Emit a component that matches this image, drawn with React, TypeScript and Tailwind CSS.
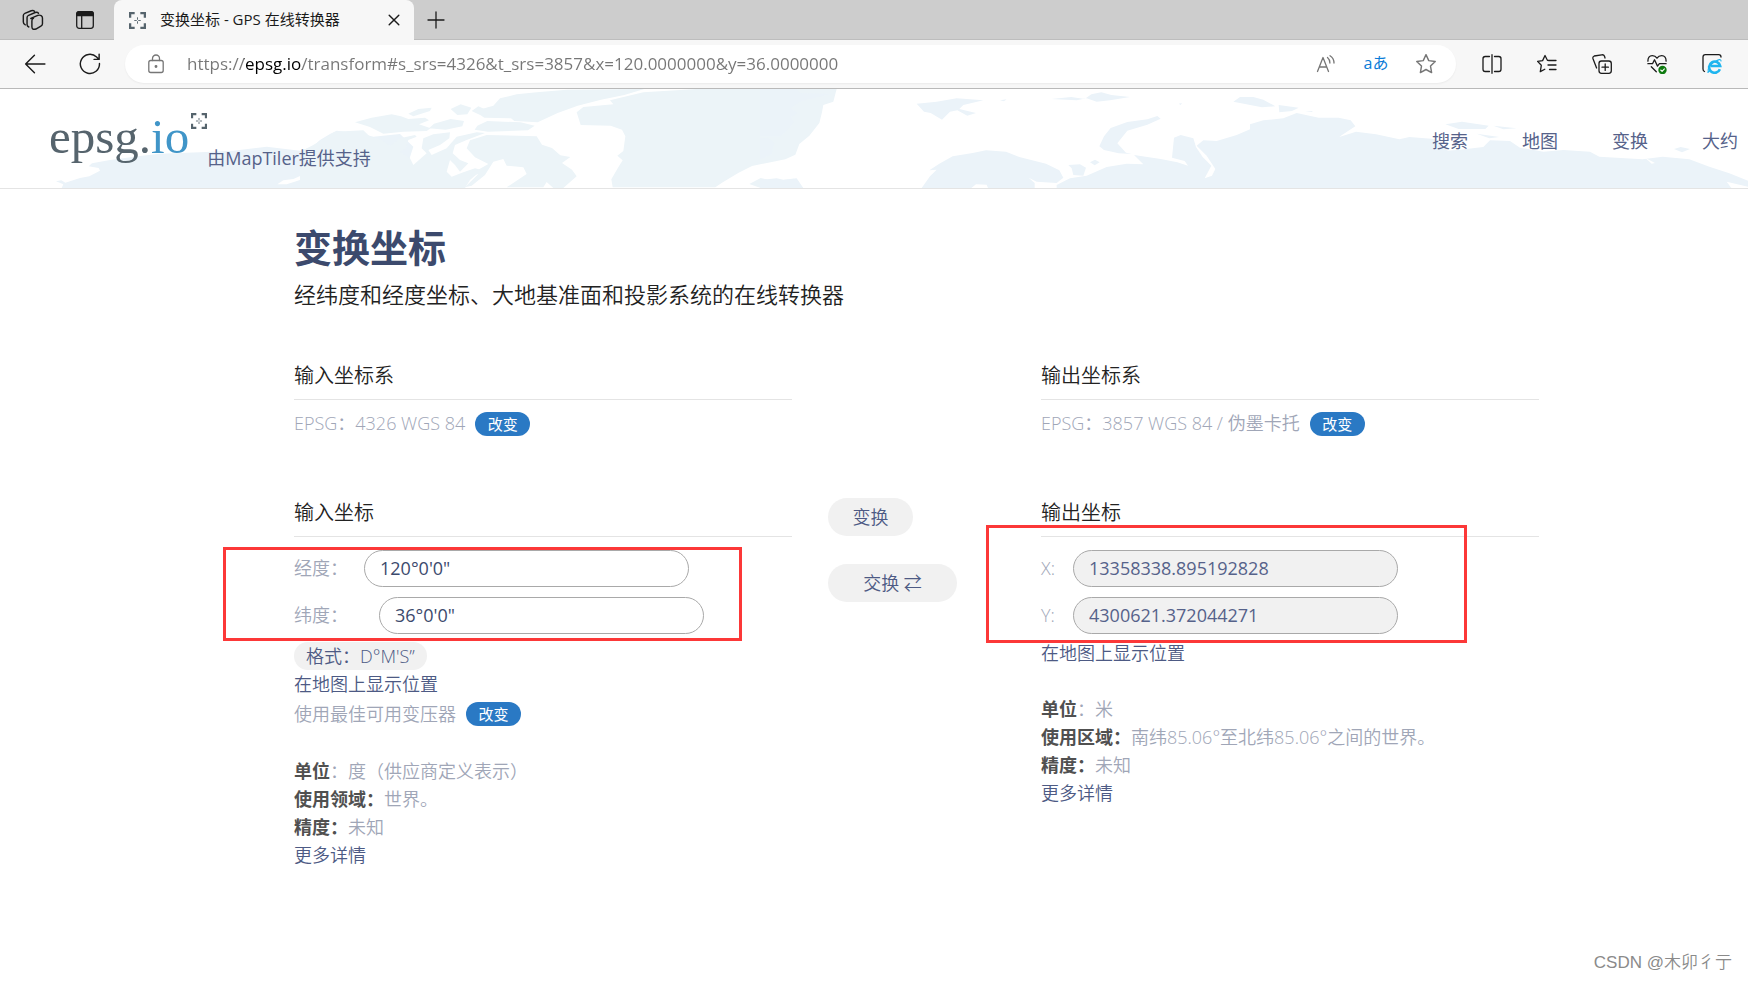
import { useState, type ReactNode } from "react";

const NAV_LINKS = ["搜索", "地图", "变换", "大约"];

const INPUT_DETAILS = [
  { label: "单位", colon: "：", value: "度（供应商定义表示）" },
  { label: "使用领域：", colon: "", value: "世界。" },
  { label: "精度：", colon: "", value: "未知" },
];

const OUTPUT_DETAILS = [
  { label: "单位", colon: "：", value: "米" },
  { label: "使用区域：", colon: "", value: "南纬85.06°至北纬85.06°之间的世界。" },
  { label: "精度：", colon: "", value: "未知" },
];

function Icon({ size = 20, children }: { size?: number; children: ReactNode }) {
  return (
    <svg
      width={size}
      height={size}
      viewBox="0 0 20 20"
      fill="none"
      stroke="currentColor"
      strokeWidth="1.3"
      strokeLinecap="round"
      strokeLinejoin="round"
      aria-hidden="true"
    >
      {children}
    </svg>
  );
}

function TargetIcon({ size }: { size: number }) {
  return (
    <svg width={size} height={size} viewBox="0 0 18 18" fill="none" stroke="#56646d" aria-hidden="true">
      <path strokeWidth="2.4" d="M1.2 6V1.2H6M12 1.2h4.8V6M16.8 12v4.8H12M6 16.8H1.2V12" />
      <path strokeWidth="1" d="M9 5.6v2.6M9 9.8v2.6M5.6 9h2.6M9.8 9h2.6" />
    </svg>
  );
}

function TabStrip() {
  return (
    <div className="flex h-10 items-stretch border-b border-[#bdbdbd] bg-[#cdcdcd] text-[#1b1b1b]">
      <div className="flex w-[114px] items-center gap-[31px] pl-[22px]">
        <button aria-label="Workspaces">
          <Icon size={22}>
            <path d="M8.2 8.4 14.6 5.6q1.6-.5 3 .2 1.2.7 1.2 2.2v5.2q0 1.5-1.4 2.2l-4.6 2.6q-3.6 1-3.6-2V10.4q0-1.4 1.4-2z" transform="translate(-.2 .2)" />
            <path d="M6.2 16.4q-1.6-.6-1.6-2.2V7.8q0-1.4 1.4-2l6-2.6q2-.6 3 .6" />
            <path d="M3 14.4q-1.8-.8-1.8-2.6V6q0-1.4 1.4-2L8.4 1.6q1.8-.6 3 .4" />
          </Icon>
        </button>
        <button aria-label="Tab actions">
          <Icon>
            <rect x="1.7" y="1.7" width="16.6" height="16.6" rx="2.5" />
            <path d="M1.7 5.5V4q0-2.3 2.3-2.3h12q2.3 0 2.3 2.3v1.5z" fill="currentColor" />
            <path d="M6.7 6v12" />
          </Icon>
        </button>
      </div>
      <div className="-mb-px flex w-[300px] items-center rounded-t-lg bg-[#f7f7f7] pr-3 pl-[15px]">
        <TargetIcon size={17} />
        <span className="ml-[14px] flex-1 truncate pb-0.5 text-[15px] leading-5">变换坐标 - GPS 在线转换器</span>
        <button aria-label="Close tab">
          <Icon size={16}>
            <path d="M4 4l12 12M16 4 4 16" strokeWidth="1.8" />
          </Icon>
        </button>
      </div>
      <button aria-label="New tab" className="ml-3">
        <Icon>
          <path d="M10 2v16M2 10h16" />
        </Icon>
      </button>
    </div>
  );
}

function ToolButton({ label, children }: { label: string; children: ReactNode }) {
  return (
    <button aria-label={label} className="flex w-[55px] shrink-0 items-center justify-center">
      {children}
    </button>
  );
}

function AddressBar() {
  const [url, setUrl] = useState(
    "https://epsg.io/transform#s_srs=4326&t_srs=3857&x=120.0000000&y=36.0000000"
  );

  return (
    <div className="flex h-[38px] min-w-0 flex-1 items-stretch rounded-full bg-white pr-[5px] text-[#767676] shadow-xs">
      <button aria-label="Site information" className="flex w-[62px] shrink-0 items-center justify-center">
        <Icon>
          <rect x="2.8" y="6.5" width="14.4" height="12" rx="2" />
          <path d="M6.5 6.5V4.5a3.5 3.5 0 0 1 7 0v2" />
          <circle cx="10" cy="12.500" r=".8" fill="currentColor" />
        </Icon>
      </button>
      {/* The gradient darkens the host part of the address */}
      <input
        aria-label="Address"
        value={url}
        onChange={(e) => setUrl(e.target.value)}
        className="min-w-0 flex-1 bg-[linear-gradient(to_right,#767676_57px,#000_57px,#000_115px,#767676_115px)] bg-clip-text text-[17px] text-transparent outline-none"
      />
      <button aria-label="Read aloud" className="flex w-[50px] items-center justify-center">
        <Icon>
          <path d="M1.5 17.5 7 3.5l5.5 14M3.3 13h7.4M11.5 3.5q2.4 2 2.4 5.5M14 1.8q4 2.6 4 7.2" />
        </Icon>
      </button>
      <button aria-label="Translate" className="w-[50px] pb-0.5 text-[16px] text-[#0a7cd8]">
        aあ
      </button>
      <button aria-label="Add to favorites" className="flex w-[50px] items-center justify-center">
        <Icon size={22}>
          <path d="m10 1.5 2.5 5.4 5.9.8-4.3 4.2 1 5.9L10 15l-5.1 2.8 1-5.9-4.300-4.200 5.900-.8z" />
        </Icon>
      </button>
    </div>
  );
}

function Toolbar() {
  return (
    <div className="flex h-[49px] items-stretch border-b border-[#b9b9b9] bg-[#f7f7f7] py-[5px] pr-[9px] pl-[7px] text-[#1b1b1b]">
      <ToolButton label="Back">
        <Icon size={22}>
          <path d="M19 10H1.5M9.500 2 1.500 10l8 8" />
        </Icon>
      </ToolButton>
      <ToolButton label="Reload">
        <Icon size={22}>
          <path d="M18.6 9.5a8.7 8.7 0 1 1-2.6-5.800l1.800 1.700M18.300 1v4.800h-4.600" />
        </Icon>
      </ToolButton>
      <div className="mx-2 flex min-w-0 flex-1">
        <AddressBar />
      </div>
      <ToolButton label="Split screen">
        <Icon>
          <path d="M7.5 2.500H3.200Q1 2.500 1 4.700v10.600q0 2.200 2.200 2.200h4.300M12.500 2.500h4.300q2.200 0 2.200 2.200v10.600q0 2.200-2.200 2.200h-4.300M10 .7v18.600" />
        </Icon>
      </ToolButton>
      <ToolButton label="Favorites">
        <Icon>
          <path d="M12 6.500 10.400 6.300 8 1.500 5.600 6.600l-5 .8 3.700 3.900-1 6.300 4.500-2.400M12.500 6.500H19M11 11h8M12.500 15.500H19" />
        </Icon>
      </ToolButton>
      <ToolButton label="Collections">
        <Icon>
          <rect x="7" y="7" width="12.300" height="12.300" rx="2.500" />
          <path d="M13.200 10v6.400M10 13.200h6.400M4.600 14 1 4.700q-.6-2 1.200-2.700l7.500-1.200q2.200-.3 2.800 1.400l.5 1.800" />
        </Icon>
      </ToolButton>
      <ToolButton label="Browser essentials">
        <Icon>
          <path d="M.9 7.200Q.8 1.700 5.300 1.700q3 0 4.700 2.500 1.700-2.500 4.700-2.500 4.500 0 4.400 5.500M.9 9.700h4.600l2-3.900 3 6.300 1.900-2.400h6.700M4.300 12.800l5 5" />
          <circle cx="15.500" cy="16" r="4.200" fill="#0f7b10" stroke="none" />
          <path d="m13.700 16 1.400 1.300 2.300-2.500" stroke="#fff" strokeWidth="1.100" />
        </Icon>
      </ToolButton>
      <ToolButton label="Internet Explorer mode">
        <Icon>
          <path d="M2.500 17.500Q1 17 1 15V3q0-2.300 2.300-2.300h13.400Q19 .7 19 3" />
          <path d="M17.900 15.300A5.600 5.600 0 1 1 18.200 12H8.800" stroke="#1fb5ef" strokeWidth="2.600" strokeLinecap="butt" strokeLinejoin="miter" />
          <path d="M7.500 17.200q-2.300 2.400-1.300.2-1.300-4 6.200-9.500Q19 3.800 19 7" stroke="#1fb5ef" strokeWidth="1.100" />
        </Icon>
      </ToolButton>
    </div>
  );
}

// Arctic coastlines, drawn in four strips at a third of their size
function WorldMap() {
  return (
    <svg
      className="absolute inset-0 h-full w-full"
      viewBox="0 0 5244 297"
      preserveAspectRatio="xMidYMid slice"
      fill="#ebf3f9"
      aria-hidden="true"
    >
      <g transform="translate(0 -267)">
        <path d="M185 564 190 553 168 544 184 541 196 548 240 534 268 529 300 512 296 504 266 499 276 490 330 480 420 468 480 461 600 457 700 452 800 440 900 452 938 440 960 420 990 402 1010 392 1060 398 1080 400 1120 410 1200 402 1240 440 1200 564z" />
        <path d="m832 553 18-12 30-4 22-10 6 10-24 8-24 8z" fill="#fff" />
      </g>
      <g transform="translate(900 -12)" fill="#ecf4f8">
        <path d="M0 200 40 180 90 150 105 140 190 136 210 155 245 165 270 182 300 160 345 150 350 155 325 165 318 190 300 200 330 220 340 240 380 205 365 190 370 160 400 148 450 142 448 160 420 180 385 195 395 210 440 190 470 155 530 142 555 144 500 165 465 180 458 205 480 225 505 235 480 260 465 240 450 225 440 260 455 275 490 262 525 250 545 255 510 285 495 309H0z" />
        <path d="m165 112 50-14 60-10 28 6 22 8 50-4 12 8-30 12 35 12-12 8-70 2-60 6-40-20zM325 86l30-14 40-4-5 10-50 16zM452 72l30-14 32 10-12 20-30 2zM402 116l50-14 40 6-5 16-50 10-50-4zM532 122l30-14 100 4 42 10-20 14-120 4-40-6zM580 62l20-22 50-12 60-6 90-8 233-2-60 18-70 14-70 18-60 22-60 28-70-4-10-8-80-2-30-20zM515 78l20-14 40 18-30 10zM500 190l10-24 50-16 150 4 16 25 30 10 25 22 30 5-25 18 30 20 14 20-40 35h-30l-20-18-10 16H620l60-40-10-20-50-5-10-20-30 8-25 40-40 32-20 5 40-40-40 10 70-40-40-20z" />
        <path d="m830 82 20-16 90-8-10-12 100-24 160-10h420l-10 38-30 10-4 22-8 32-30 38-30 25-12 32-30 14-100 20-40 20-50 30-20 14H938l-4-24 20-35 14-22-16-14 18-14 6-44-10-20-34-12-90-2z" />
        <path d="m1348 297 34-18 40 10 60-8 20 28h-120z" />
      </g>
      <g transform="translate(2280 -12)">
        <path d="M60 12h50l10 12 92 3-40 10-50 12-30 20 20 16-20 12 10 14-20 24-22 20H0V12zM0 160l25-2 18 15-8 35-35 15zM0 285l50-5 20 4 40-4 20 29H0z" />
        <path d="m470 56 60-6 60-10 80 6-60 14-12 12 50 12-26 8-30-16-22 4-24 24-34-20-20-4zM720 46l20-3-8 6zM874 42l60-6 40 6 20-14 30-6 30 8 56 6-60 10-40 4-30-10-30 6zM1256 56l10-2-4 6z" />
        <path d="m485 309 25-35 20-20-22 2 30-20 40-22 60-10 40-8 60 4 40 16 80 20 40 20 12 22-20 16-60-4-24-12 18 16v15zM1018 184l14-30 20-25 50-18 60-8 30-10 10 8-40 18-60 18-30 38 26 28 18 4-40-2-44-10z" />
        <path d="m890 300 40-20 50-8 60-26 60-10 50 2-28-28 80 12 50 10 32 10-10-14-38-10 6-60 20-8 38 10 8 26 20 30 26 26-20 38 22-8 10-20-26-40-30-30 20-16 40 2 60-18 70-30v191H890zM925 240l35-2 18 10-8 24-30-2-5-20zM990 232l15-8 14 8-15 9z" />
        <path d="m634 309 14-11 32 1 4 10z" fill="#fff" />
      </g>
      <g transform="translate(3750 -12)">
        <path d="m-50 50 20-14 40 0 30 8 36 20-40 3zM86 60l60 8-20 10-38 4zM165 78h22v3zM586 118l50-8 80 12-10 10-80 0zM730 122l70 8-40 3zM680 146l68 10-30 4zM1272 192l20-6 28 6-24 10z" />
        <path d="m0 118 40-12 60-6 40-16 66 14 60 0 36 8 14 18-40 26-8 6 50-16 60 8 70 15 30-7 75 6 40 30-20 117H0z" />
        <path d="m548 200 82-6 70-8 20-20 60 2 30 20 70 12 60-5 80 5 28 15 130 8 60-8 80 8 60 22 60 20 56 22v22H450z" />
        <path d="m1185 218 30 16-10 2zM1430 290l64 15v4h-50z" fill="#fff" />
      </g>
    </svg>
  );
}

function SiteHeader() {
  return (
    <header className="relative flex h-[100px] justify-between overflow-hidden border-b border-[#e4e4e4] bg-white pr-[10px] pl-[49px]">
      <WorldMap />
      <div className="relative flex">
        <a
          href="#home"
          className="pt-5 font-['Liberation_Serif','Noto_Sans_CJK_SC',serif] text-[49px] leading-[56px] text-[#56646d]"
        >
          epsg.<span className="text-[#4095c8]">io</span>
        </a>
        <div className="ml-0.5 pt-6">
          <TargetIcon size={16} />
        </div>
        <a href="#maptiler" className="pt-[55px] text-[18px] leading-7 text-[#56628a]">
          由MapTiler提供支持
        </a>
      </div>
      <nav className="relative flex gap-[54px] pt-[38px] text-[18px] leading-7 text-[#56628a]">
        {NAV_LINKS.map((link) => (
          <a key={link} href={`#${link}`}>
            {link}
          </a>
        ))}
      </nav>
    </header>
  );
}

function SectionTitle({ children }: { children: ReactNode }) {
  return (
    <h2 className="border-b border-[#e4e4e4] pt-px pb-[9px] text-[20px] leading-7 font-[350] text-[#222]">
      {children}
    </h2>
  );
}

function ChangeButton() {
  return (
    <button className="h-6 w-[55px] rounded-full bg-[#2a79c4] text-[15px] leading-6 font-normal text-white">
      改变
    </button>
  );
}

function Details({ rows }: { rows: typeof INPUT_DETAILS }) {
  return (
    <>
      {rows.map((row) => (
        <p key={row.label}>
          <b className="font-bold text-[#505050]">{row.label}</b>
          {row.colon}
          {row.value}
        </p>
      ))}
      <a href="#details" className="text-[#4d5a84]">
        更多详情
      </a>
    </>
  );
}

function InputColumn() {
  const [lon, setLon] = useState("120°0'0\"");
  const [lat, setLat] = useState("36°0'0\"");

  return (
    <div className="col-span-2">
      <SectionTitle>输入坐标</SectionTitle>
      <div className="relative mt-[13px] flex flex-col gap-[10px]">
        <div className="flex h-[37px] items-center">
          <label htmlFor="lon" className="w-[70px] pb-0.5">
            经度：
          </label>
          <input
            id="lon"
            value={lon}
            onChange={(e) => setLon(e.target.value)}
            className="h-full w-[325px] rounded-full border border-[#a9a9a9] bg-white px-[15px] pb-0.5 font-normal text-[#3c4a6d]"
          />
        </div>
        <div className="flex h-[37px] items-center">
          <label htmlFor="lat" className="w-[85px] pb-0.5">
            纬度：
          </label>
          <input
            id="lat"
            value={lat}
            onChange={(e) => setLat(e.target.value)}
            className="h-full w-[325px] rounded-full border border-[#a9a9a9] bg-white px-[15px] pb-0.5 font-normal text-[#3c4a6d]"
          />
        </div>
        <div className="pointer-events-none absolute -top-[3px] -bottom-[7px] -left-[71px] w-[519px] border-3 border-[#fc3838]" />
      </div>
      <button className="mt-2 block h-7 rounded-full bg-[#f1f1f1] px-3 text-[#4d5a84]">格式：D°M'S”</button>
      <a href="#map" className="block text-[#4d5a84]">
        在地图上显示位置
      </a>
      <div className="mb-[27px] flex h-8 items-center gap-[10px]">
        使用最佳可用变压器
        <ChangeButton />
      </div>
      <Details rows={INPUT_DETAILS} />
    </div>
  );
}

function OutputColumn() {
  return (
    <div className="col-span-2">
      <SectionTitle>输出坐标</SectionTitle>
      <div className="relative mt-[13px] flex flex-col gap-[10px]">
        <div className="flex h-[37px] items-center">
          <label htmlFor="out-x" className="w-8 pb-0.5">
            X:
          </label>
          <input
            id="out-x"
            readOnly
            value="13358338.895192828"
            className="h-full w-[325px] rounded-full border border-[#a9a9a9] bg-[#f1f1f1] px-[15px] pb-0.5 font-normal text-[#56628a]"
          />
        </div>
        <div className="flex h-[37px] items-center">
          <label htmlFor="out-y" className="w-8 pb-0.5">
            Y:
          </label>
          <input
            id="out-y"
            readOnly
            value="4300621.372044271"
            className="h-full w-[325px] rounded-full border border-[#a9a9a9] bg-[#f1f1f1] px-[15px] pb-0.5 font-normal text-[#56628a]"
          />
        </div>
        <div className="pointer-events-none absolute -top-[25px] -bottom-[9px] -left-[55px] w-[481px] border-3 border-[#fc3838]" />
      </div>
      <a href="#map" className="mt-[5px] mb-7 block text-[#4d5a84]">
        在地图上显示位置
      </a>
      <Details rows={OUTPUT_DETAILS} />
    </div>
  );
}

export default function App() {
  return (
    <div className="relative min-h-screen bg-white font-['Open_Sans','Noto_Sans_CJK_SC',sans-serif]">
      <TabStrip />
      <Toolbar />
      <SiteHeader />

      <main className="pt-[34px] pr-[209px] pb-28 pl-[294px] text-[18px] leading-7 font-[350] text-[#a0a6b7]">
        <h1 className="text-[38px] leading-[48px] font-bold text-[#3c4a6d]">变换坐标</h1>
        <p className="mt-[7px] text-[22px] leading-8 text-[#222]">
          经纬度和经度坐标、大地基准面和投影系统的在线转换器
        </p>

        <section className="mt-[51px] grid grid-cols-5">
          <div className="col-span-2">
            <SectionTitle>输入坐标系</SectionTitle>
            <div className="flex h-12 items-center gap-[10px]">
              <span className="pb-0.5">EPSG：4326 WGS 84</span>
              <ChangeButton />
            </div>
          </div>
          <div className="col-span-2 col-start-4">
            <SectionTitle>输出坐标系</SectionTitle>
            <div className="flex h-12 items-center gap-[10px]">
              <span className="pb-0.5">EPSG：3857 WGS 84 / 伪墨卡托</span>
              <ChangeButton />
            </div>
          </div>
        </section>

        <section className="mt-[50px] grid grid-cols-5">
          <InputColumn />
          <div className="flex flex-col items-start gap-7 pl-9 text-[#4d5a84]">
            <button className="h-[38px] w-[85px] rounded-full bg-[#f1f1f1]">变换</button>
            <button className="h-[38px] w-[129px] rounded-full bg-[#f1f1f1]">交换 ⇄</button>
          </div>
          <OutputColumn />
        </section>
      </main>

      <div className="absolute right-4 bottom-1 font-['Liberation_Sans','Noto_Sans_CJK_SC',sans-serif] text-[17px] leading-7 font-[350] text-[#8a8a8a]">
        CSDN @木卯彳亍
      </div>
    </div>
  );
}
